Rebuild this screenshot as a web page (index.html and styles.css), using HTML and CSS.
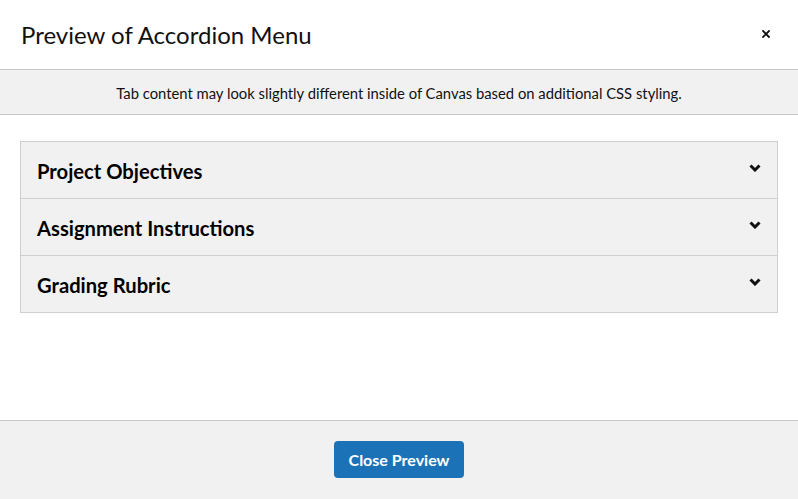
FILE: index.html
```html
<!DOCTYPE html>
<html lang="en">
<head>
<meta charset="utf-8">
<title>Preview of Accordion Menu</title>
<link rel="stylesheet" href="styles.css">
</head>
<body>
<div class="modal">
  <header class="modal-header">
    <h1 class="modal-title">Preview of Accordion Menu</h1>
    <button class="close-x" aria-label="Close">
      <svg width="8" height="8" viewBox="0 0 8 8"><path d="M1 1L7 7M7 1L1 7" stroke="#111" stroke-width="1.8" stroke-linecap="square"/></svg>
    </button>
  </header>
  <div class="notice">Tab content may look slightly different inside of Canvas based on additional CSS styling.</div>
  <main class="modal-body">
    <div class="accordion">
      <div class="acc-item"><span class="acc-title">Project Objectives</span><svg class="chev" width="12" height="8" viewBox="0 0 12 8"><path d="M1.5 1.5L6 6L10.5 1.5" fill="none" stroke="#111" stroke-width="3"/></svg></div>
      <div class="acc-item"><span class="acc-title">Assignment Instructions</span><svg class="chev" width="12" height="8" viewBox="0 0 12 8"><path d="M1.5 1.5L6 6L10.5 1.5" fill="none" stroke="#111" stroke-width="3"/></svg></div>
      <div class="acc-item"><span class="acc-title">Grading Rubric</span><svg class="chev" width="12" height="8" viewBox="0 0 12 8"><path d="M1.5 1.5L6 6L10.5 1.5" fill="none" stroke="#111" stroke-width="3"/></svg></div>
    </div>
  </main>
  <footer class="modal-footer">
    <button class="btn-primary">Close Preview</button>
  </footer>
</div>
</body>
</html>
```
FILE: styles.css
```css
* { box-sizing: border-box; }
html, body { margin: 0; padding: 0; }
body {
  font-family: Lato, "Open Sans", "Liberation Sans", sans-serif;
  color: #111;
  background: #fff;
  width: 798px;
  height: 499px;
  overflow: hidden;
}
.modal {
  display: flex;
  flex-direction: column;
  height: 499px;
}
.modal-header {
  height: 70px;
  display: flex;
  align-items: center;
  justify-content: space-between;
  padding: 0 28px 0 21px;
  border-bottom: 1px solid #c7c7c7;
}
.modal-title {
  margin: 0;
  font-size: 24px;
  font-weight: 400;
  line-height: 1;
  margin-top: 1px;
}
.close-x {
  border: 0;
  background: none;
  padding: 0;
  width: 8px;
  height: 8px;
  display: flex;
  margin-top: -1px;
}
.notice {
  height: 45px;
  background: #f1f1f1;
  border-bottom: 1px solid #c7c7c7;
  display: flex;
  align-items: center;
  justify-content: center;
  font-size: 14.8px;
  padding-top: 1px;
}
.modal-body {
  flex: 1;
  padding: 26px 20px 0 20px;
}
.accordion {
  border: 1px solid #cfcfcf;
  background: #f1f1f1;
}
.acc-item {
  height: 57px;
  display: flex;
  align-items: center;
  justify-content: space-between;
  padding: 0 16px 0 16px;
  border-top: 1px solid #cfcfcf;
}
.acc-item:first-child { border-top: 0; height: 56px; }
.acc-title {
  font-size: 20.2px;
  font-weight: 700;
  margin-top: 2px;
  color: #000;
}
.chev { margin-top: -4px; }
.modal-footer {
  height: 79px;
  background: #f1f1f1;
  border-top: 1px solid #c7c7c7;
  display: flex;
  justify-content: center;
  align-items: flex-start;
  padding-top: 20px;
}
.btn-primary {
  font-family: Lato, "Open Sans", "Liberation Sans", sans-serif;
  background: #1b72b7;
  color: #fff;
  border: 0;
  border-radius: 4px;
  height: 37px;
  width: 130px;
  font-size: 16px;
  font-weight: 700;
  padding: 0;
}
```
